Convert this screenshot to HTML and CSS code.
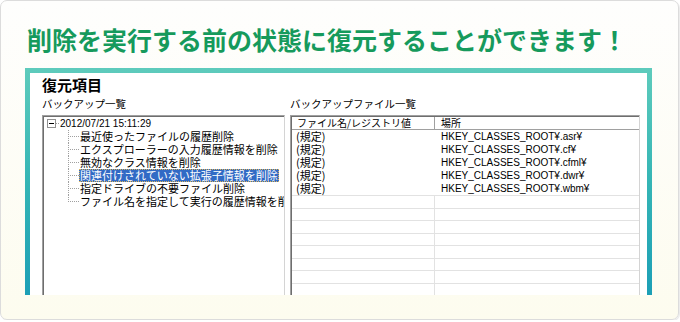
FILE: index.html
```html
<!DOCTYPE html>
<html lang="ja">
<head>
<meta charset="utf-8">
<link rel="stylesheet" href="styles.css">
</head>
<body>
<div class="card">
  <div class="head">
    <h1 class="headline">削除を実行する前の状態に復元することができます！</h1>
  </div>
  <div class="frame">
    <div class="win">
      <div class="wtitle">復元項目</div>
      <div class="cols">
        <div class="col">
          <div class="label">バックアップ一覧</div>
          <div class="tree">
            <div class="node root">
              <svg class="conn-root" width="13" height="13" viewBox="0 0 13 13">
                <rect x="0.5" y="2.5" width="8" height="8" fill="#fff" stroke="#919191"/>
                <line x1="2" y1="6.5" x2="7" y2="6.5" stroke="#000"/>
                <line x1="9" y1="6.5" x2="13" y2="6.5" stroke="#a0a0a0" stroke-dasharray="1 1"/>
              </svg>
              <span class="lat">2012/07/21 15:11:29</span>
            </div>
            <div class="node child">
              <svg class="conn" width="11" height="13" viewBox="0 0 11 13"><line x1="0.5" y1="0" x2="0.5" y2="13" stroke="#a0a0a0" stroke-dasharray="1 1"/><line x1="2" y1="6.5" x2="11" y2="6.5" stroke="#a0a0a0" stroke-dasharray="1 1"/></svg>
              <span class="txt">最近使ったファイルの履歴削除</span>
            </div>
            <div class="node child">
              <svg class="conn" width="11" height="13" viewBox="0 0 11 13"><line x1="0.5" y1="0" x2="0.5" y2="13" stroke="#a0a0a0" stroke-dasharray="1 1"/><line x1="2" y1="6.5" x2="11" y2="6.5" stroke="#a0a0a0" stroke-dasharray="1 1"/></svg>
              <span class="txt">エクスプローラーの入力履歴情報を削除</span>
            </div>
            <div class="node child">
              <svg class="conn" width="11" height="13" viewBox="0 0 11 13"><line x1="0.5" y1="0" x2="0.5" y2="13" stroke="#a0a0a0" stroke-dasharray="1 1"/><line x1="2" y1="6.5" x2="11" y2="6.5" stroke="#a0a0a0" stroke-dasharray="1 1"/></svg>
              <span class="txt">無効なクラス情報を削除</span>
            </div>
            <div class="node child">
              <svg class="conn" width="11" height="13" viewBox="0 0 11 13"><line x1="0.5" y1="0" x2="0.5" y2="13" stroke="#a0a0a0" stroke-dasharray="1 1"/><line x1="2" y1="6.5" x2="11" y2="6.5" stroke="#a0a0a0" stroke-dasharray="1 1"/></svg>
              <span class="txt sel">関連付けされていない拡張子情報を削除</span>
            </div>
            <div class="node child">
              <svg class="conn" width="11" height="13" viewBox="0 0 11 13"><line x1="0.5" y1="0" x2="0.5" y2="13" stroke="#a0a0a0" stroke-dasharray="1 1"/><line x1="2" y1="6.5" x2="11" y2="6.5" stroke="#a0a0a0" stroke-dasharray="1 1"/></svg>
              <span class="txt">指定ドライブの不要ファイル削除</span>
            </div>
            <div class="node child">
              <svg class="conn" width="11" height="13" viewBox="0 0 11 13"><line x1="0.5" y1="0" x2="0.5" y2="7" stroke="#a0a0a0" stroke-dasharray="1 1"/><line x1="2" y1="6.5" x2="11" y2="6.5" stroke="#a0a0a0" stroke-dasharray="1 1"/></svg>
              <span class="txt">ファイル名を指定して実行の履歴情報を削除</span>
            </div>
          </div>
        </div>
        <div class="col">
          <div class="label">バックアップファイル一覧</div>
          <div class="list">
            <div class="lrow lhead"><div class="c1">ファイル名/レジストリ値</div><div class="c2">場所</div></div>
            <div class="lrow data"><div class="c1">(規定)</div><div class="c2 lat">HKEY_CLASSES_ROOT¥.asr¥</div></div>
            <div class="lrow data"><div class="c1">(規定)</div><div class="c2 lat">HKEY_CLASSES_ROOT¥.cf¥</div></div>
            <div class="lrow data"><div class="c1">(規定)</div><div class="c2 lat">HKEY_CLASSES_ROOT¥.cfml¥</div></div>
            <div class="lrow data"><div class="c1">(規定)</div><div class="c2 lat">HKEY_CLASSES_ROOT¥.dwr¥</div></div>
            <div class="lrow data"><div class="c1">(規定)</div><div class="c2 lat">HKEY_CLASSES_ROOT¥.wbm¥</div></div>
            <div class="lrow empty"><div class="c1"></div><div class="c2"></div></div>
            <div class="lrow empty"><div class="c1"></div><div class="c2"></div></div>
            <div class="lrow empty"><div class="c1"></div><div class="c2"></div></div>
            <div class="lrow empty"><div class="c1"></div><div class="c2"></div></div>
            <div class="lrow empty"><div class="c1"></div><div class="c2"></div></div>
            <div class="lrow empty"><div class="c1"></div><div class="c2"></div></div>
            <div class="lrow empty"><div class="c1"></div><div class="c2"></div></div>
            <div class="lrow empty"><div class="c1"></div><div class="c2"></div></div>
            <div class="lrow empty"><div class="c1"></div><div class="c2"></div></div>
          </div>
        </div>
      </div>
    </div>
  </div>
</div>
</body>
</html>
```

FILE: styles.css
```css
html, body {
  margin: 0;
  padding: 0;
  background: #ffffff;
}

body {
  font-family: "Noto Sans CJK JP", "Noto Sans", sans-serif;
  color: #000;
}

.card {
  width: 679px;
  height: 320px;
  box-sizing: border-box;
  border: 1px solid #dcdcdc;
  border-radius: 7px;
  background: linear-gradient(#fefefd, #fdfcef);
  box-shadow: 1px 1px 0 #ececec;
  display: flex;
  flex-direction: column;
  overflow: hidden;
}

.head {
  height: 67px;
  flex: none;
  padding-left: 26px;
  box-sizing: border-box;
}

.headline {
  margin: 0;
  padding-top: 21px;
  font-size: 25px;
  line-height: 34px;
  font-weight: 700;
  color: #169a5c;
  white-space: nowrap;
}

.frame {
  flex: none;
  margin-left: 24px;
  width: 627px;
  height: 227px;
  box-sizing: border-box;
  padding: 5px 5px 0 5px;
  background: linear-gradient(#5ecbbc, #35b5b5 50%, #1c9fb6);
  overflow: hidden;
}

.win {
  background: #ffffff;
  height: 222px;
  box-sizing: border-box;
  padding: 2px 7px 0 12px;
}

.wtitle {
  font-size: 15px;
  line-height: 20px;
  font-weight: 700;
}

.cols {
  display: grid;
  grid-template-columns: 243px 350px;
  column-gap: 5px;
}

.label {
  font-size: 10.5px;
  line-height: 18px;
  margin-bottom: 2px;
  white-space: nowrap;
}

.tree,
.list {
  height: 190px;
  box-sizing: border-box;
  border: 1px solid;
  border-color: #a0a0a0 #d4d4d4 #d4d4d4 #a0a0a0;
  box-shadow: inset 1px 1px 0 #6e6e6e;
  background: #fff;
  overflow: hidden;
}

.tree {
  padding: 1px 0 0 2px;
}

.node {
  display: flex;
  align-items: center;
  height: 13px;
  white-space: nowrap;
  font-size: 11px;
  line-height: 13px;
}

.conn-root {
  flex: none;
  margin-left: 2px;
}

.child .conn {
  flex: none;
  margin-left: 23px;
}

.txt {
  padding: 0 1px;
  height: 13px;
  line-height: 13px;
}

.sel {
  background: #316ac5;
  color: #fff;
  outline: 1px dotted #d9b25a;
  outline-offset: -1px;
}

.lat {
  font-family: "Liberation Sans", Arial, sans-serif;
  font-size: 10px;
}

.list {
  padding: 1px 0 0 1px;
}

.lrow {
  display: flex;
  white-space: nowrap;
}

.c1 {
  width: 143px;
  flex: none;
  box-sizing: border-box;
  border-right: 1px solid transparent;
}

.c2 {
  flex: 1;
}

.lhead {
  height: 13px;
  box-sizing: border-box;
  border-bottom: 1px solid #a0a0a0;
  font-size: 10px;
  line-height: 12px;
}

.lhead .c1 {
  padding-left: 5px;
  border-right-color: #a0a0a0;
}

.lhead .c2 {
  padding-left: 6px;
}

.data {
  height: 13px;
  font-size: 11px;
  line-height: 13px;
}

.data .c1 {
  padding-left: 4px;
}

.data .c2 {
  padding-left: 6px;
}

.empty {
  height: 12.5px;
  box-sizing: border-box;
  border-top: 1px solid #e2e2e2;
}

.empty .c1 {
  border-right-color: #e2e2e2;
}
```
